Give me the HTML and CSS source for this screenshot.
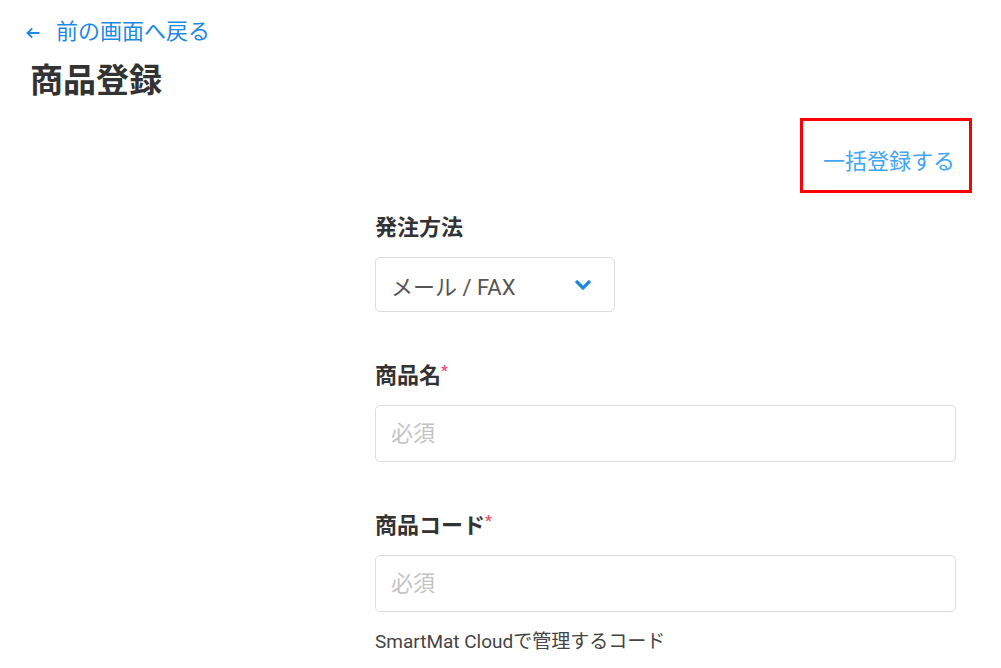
FILE: index.html
```html
<!DOCTYPE html>
<html lang="ja">
<head>
  <meta charset="UTF-8">
  <title>商品登録</title>
  <link rel="stylesheet" href="styles.css">
</head>
<body>
  <div class="page">
    <a class="back" href="#">
      <svg class="back-icon" width="14" height="12" viewBox="0 0 14 12"><path d="M13.5 6H1.5M6.2 1.3L1.5 6l4.7 4.7" fill="none" stroke="currentColor" stroke-width="1.9"/></svg>
      <span>前の画面へ戻る</span>
    </a>
    <h1 class="title">商品登録</h1>

    <div class="toolbar">
      <div class="bulk-box"><a class="bulk" href="#">一括登録する</a></div>
    </div>

    <form class="form">
      <div class="field">
        <label class="label">発注方法</label>
        <div class="select">
          <span>メール / FAX</span>
          <svg class="chevron" width="18" height="11" viewBox="0 0 18 11"><path d="M2 2l7 7 7-7" fill="none" stroke="currentColor" stroke-width="3.2"/></svg>
        </div>
      </div>
      <div class="field">
        <label class="label">商品名<span class="req">*</span></label>
        <input class="input" type="text" placeholder="必須">
      </div>
      <div class="field">
        <label class="label">商品コード<span class="req">*</span></label>
        <input class="input" type="text" placeholder="必須">
        <p class="help">SmartMat Cloudで管理するコード</p>
      </div>
    </form>
  </div>
</body>
</html>
```

FILE: styles.css
```css
body {
  margin: 0;
  background: #fff;
  color: #333;
  font-family: Roboto, "Noto Sans CJK JP", sans-serif;
}
.page {
  padding: 18px 29px 0 26px;
}
.back {
  display: flex;
  align-items: center;
  gap: 16px;
  color: #1e88e5;
  text-decoration: none;
  font-size: 22px;
  line-height: 28px;
}
.back-icon {
  margin-top: 1px;
}
.title {
  margin: 13px 0 0 4px;
  font-size: 33px;
  line-height: 44px;
  font-weight: 700;
  color: #333;
}
.toolbar {
  display: flex;
  justify-content: flex-end;
  margin-top: 15px;
}
.bulk-box {
  border: 3px solid #ff0000;
  width: 166px;
  height: 69px;
  display: flex;
  align-items: center;
  justify-content: center;
}
.bulk {
  color: #42a5f5;
  text-decoration: none;
  font-size: 22px;
  margin-top: 6px;
  margin-left: 6px;
}
.form {
  margin: 21px 0 0 349px;
  width: 581px;
}
.field {
  margin-bottom: 50px;
}
.field:last-child {
  margin-bottom: 0;
}
.label {
  display: block;
  font-size: 22px;
  line-height: 28px;
  font-weight: 700;
  color: #333;
  margin-bottom: 15px;
}
.req {
  color: #f44d6b;
  font-size: 15px;
  vertical-align: top;
  line-height: 18px;
}
.select {
  box-sizing: border-box;
  width: 240px;
  height: 55px;
  margin-top: 1px;
  border: 1px solid #ddd;
  border-radius: 5px;
  display: flex;
  align-items: center;
  justify-content: space-between;
  padding: 0 22px 0 15px;
  font-size: 22px;
  color: #555;
}
.chevron {
  color: #1e88e5;
}
.input {
  box-sizing: border-box;
  display: block;
  width: 100%;
  height: 57px;
  border: 1px solid #ddd;
  border-radius: 5px;
  padding: 0 15px;
  font-family: inherit;
  font-size: 22px;
  color: #333;
}
.input::placeholder {
  color: #c4c4c4;
}
.help {
  margin: 16px 0 0;
  font-size: 19px;
  line-height: 28px;
  color: #444;
}
```
